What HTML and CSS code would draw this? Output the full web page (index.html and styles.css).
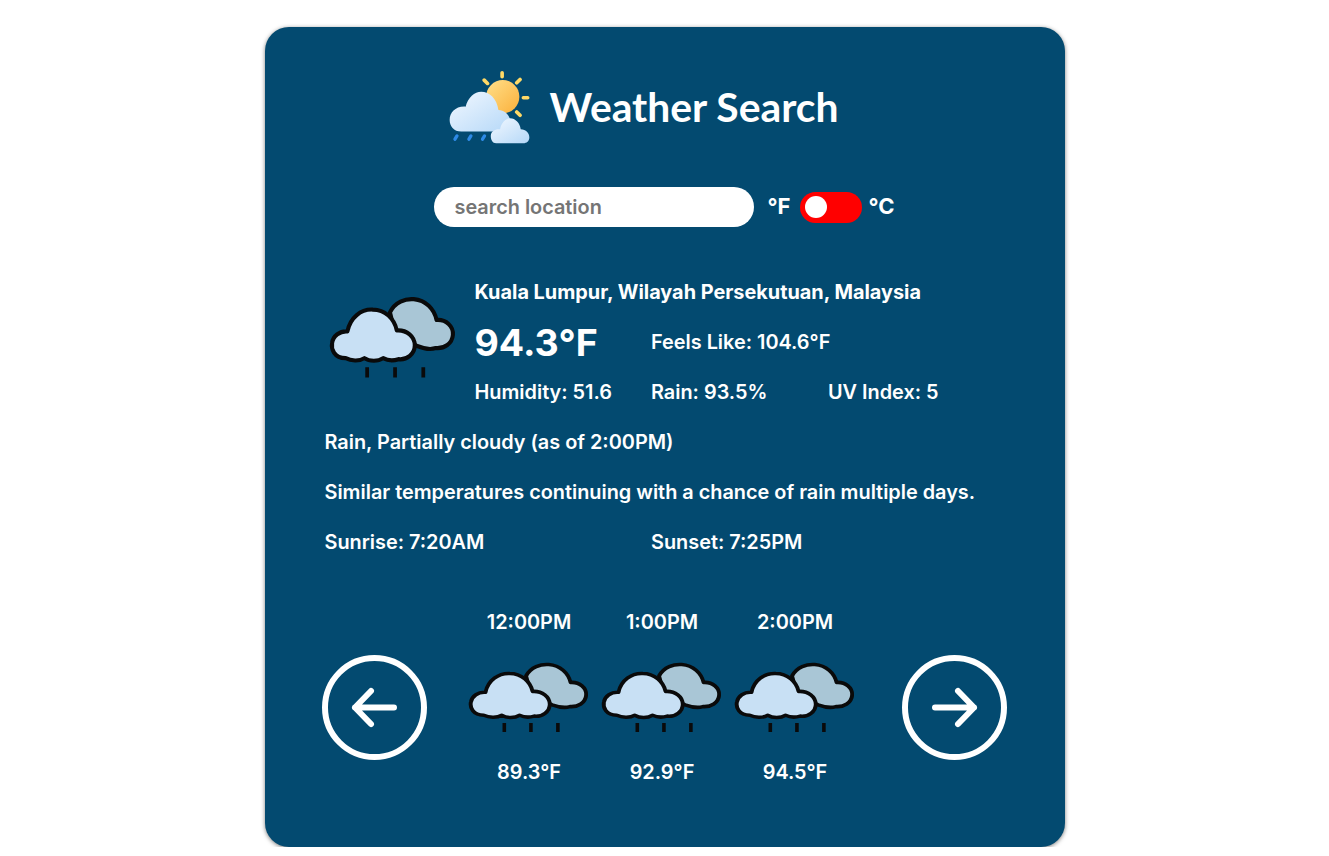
FILE: index.html
```html
<!DOCTYPE html>
<html lang="en">
<head>
    <meta charset="UTF-8">
    <meta name="viewport" content="width=device-width, initial-scale=1.0">
    <title>Weather Search</title>
    <link rel="stylesheet" href="styles.css">
</head>
<body>
    <svg class="sprites" width="0" height="0" aria-hidden="true">
        <symbol id="rainCloud" viewBox="40 50 385 245" preserveAspectRatio="none">
            <path d="M225 100 C240 70 270 60 295 62 C330 65 355 90 362 122 C390 120 412 140 410 165 C408 190 385 205 360 203 C345 208 325 205 305 197 L240 160 Z" fill="#a9c6d6" stroke="#0a0a0a" stroke-width="12" stroke-linejoin="round"/>
            <path d="M95 232 C60 232 52 205 55 188 C58 168 78 153 100 155 C108 115 140 90 175 92 C210 92 238 118 245 152 C275 150 298 170 298 195 C298 220 275 238 250 235 C235 240 220 240 205 232 C190 242 165 242 150 232 C135 242 110 240 95 232 Z" fill="#c8e0f4" stroke="#0a0a0a" stroke-width="12" stroke-linejoin="round"/>
            <path d="M158 258 V288 M240 258 V288 M323 258 V288" stroke="#0a0a0a" stroke-width="11" fill="none"/>
        </symbol>
    </svg>

    <div class="card">
        <div class="header">
            <svg class="logo" viewBox="55 60 250 225">
                <defs>
                    <linearGradient id="sunFill" x1="0" y1="0" x2="1" y2="1">
                        <stop offset="0" stop-color="#ffe08a"/>
                        <stop offset="1" stop-color="#fbb03b"/>
                    </linearGradient>
                    <linearGradient id="cloudFill" x1="0" y1="0" x2="1" y2="1">
                        <stop offset="0" stop-color="#f2f8ff"/>
                        <stop offset="1" stop-color="#b5d8f8"/>
                    </linearGradient>
                </defs>
                <path d="M218 68 V80 M164 90 L174 100 M272 88 L262 98 M282 143 H295 M262 186 L272 196" stroke="#ffd966" stroke-width="11" stroke-linecap="round"/>
                <circle cx="220" cy="140" r="50" fill="url(#sunFill)"/>
                <path d="M95 245 C72 245 60 228 60 210 C60 188 78 168 108 170 C115 142 135 125 155 125 C180 125 202 145 207 180 C232 182 248 200 245 245 Z" fill="url(#cloudFill)"/>
                <path d="M200 280 C188 280 183 268 184 256 C185 244 198 236 212 238 C215 220 228 205 242 205 C258 205 272 220 274 238 C290 238 300 250 300 262 C300 274 292 280 282 280 Z" fill="url(#cloudFill)"/>
                <path d="M82 258 L76 268 M124 258 L118 268 M165 258 L159 268" stroke="#2e8ae6" stroke-width="10" stroke-linecap="round"/>
            </svg>
            <h1>Weather Search</h1>
        </div>

        <div class="search-row">
            <input type="text" class="search-input" placeholder="search location">
            <span class="unit">°F</span>
            <div class="toggle"><span class="knob"></span></div>
            <span class="unit">°C</span>
        </div>

        <div class="details">
            <svg class="main-icon"><use href="#rainCloud"/></svg>
            <div class="location">Kuala Lumpur, Wilayah Persekutuan, Malaysia</div>
            <div class="temp">94.3°F</div>
            <div class="feels">Feels Like: 104.6°F</div>
            <div>Humidity: 51.6</div>
            <div>Rain: 93.5%</div>
            <div>UV Index: 5</div>
            <div class="full">Rain, Partially cloudy (as of 2:00PM)</div>
            <div class="full">Similar temperatures continuing with a chance of rain multiple days.</div>
            <div class="half">Sunrise: 7:20AM</div>
            <div class="half">Sunset: 7:25PM</div>
        </div>

        <div class="forecast">
            <button class="arrow">
                <svg viewBox="0 0 105 105">
                    <circle cx="52.5" cy="52.5" r="49.5"/>
                    <path d="M72 52.5 H33 M49 36 L33 52.5 L49 69"/>
                </svg>
            </button>
            <div class="hours">
                <div class="hour">
                    <div class="hour-text">12:00PM</div>
                    <div class="hour-icon"><svg><use href="#rainCloud"/></svg></div>
                    <div class="hour-text">89.3°F</div>
                </div>
                <div class="hour">
                    <div class="hour-text">1:00PM</div>
                    <div class="hour-icon"><svg><use href="#rainCloud"/></svg></div>
                    <div class="hour-text">92.9°F</div>
                </div>
                <div class="hour">
                    <div class="hour-text">2:00PM</div>
                    <div class="hour-icon"><svg><use href="#rainCloud"/></svg></div>
                    <div class="hour-text">94.5°F</div>
                </div>
            </div>
            <button class="arrow">
                <svg viewBox="0 0 105 105">
                    <circle cx="52.5" cy="52.5" r="49.5"/>
                    <path d="M33 52.5 H72 M56 36 L72 52.5 L56 69"/>
                </svg>
            </button>
        </div>
    </div>
</body>
</html>
```

FILE: styles.css
```css
body {
    margin: 0;
    background-color: #fff;
    color: #fff;
    font-family: "Inter", "Liberation Sans", sans-serif;
    font-size: 19.86px;
    font-weight: 600;
}

.sprites {
    position: absolute;
}

.card {
    width: 800px;
    height: 820px;
    margin: 27px auto 0;
    padding: 43px 60px 0;
    box-sizing: border-box;
    background-color: #034a70;
    border-radius: 24px;
    box-shadow: 0 1px 4px rgba(0,0,0,0.5);
}

.header {
    display: flex;
    justify-content: center;
    align-items: center;
    gap: 19px;
    height: 75px;
    padding-right: 43px;
}

.logo {
    width: 83px;
    height: 75px;
}

h1 {
    margin: -2px 0 0;
    font-family: "Lato", sans-serif;
    font-size: 40.8px;
    font-weight: 700;
}

.search-row {
    display: flex;
    justify-content: center;
    align-items: center;
    gap: 10px;
    height: 40px;
    margin-top: 42px;
}

.search-input {
    width: 320px;
    height: 40px;
    margin-right: 3px;
    padding: 0 20px;
    box-sizing: border-box;
    border: none;
    border-radius: 20px;
    font-family: inherit;
    font-size: 19.86px;
    font-weight: 600;
}

.search-input::placeholder {
    color: #757575;
}

.unit {
    margin-top: -2px;
    font-size: 22px;
    font-weight: 700;
}

.toggle {
    display: flex;
    align-items: center;
    width: 62px;
    height: 31px;
    margin: 0 -3px 0 -1px;
    padding-left: 5px;
    box-sizing: border-box;
    background-color: #f00;
    border-radius: 16px;
}

.knob {
    width: 22px;
    height: 22px;
    background-color: #fff;
    border-radius: 50%;
}

.details {
    display: grid;
    grid-template-columns: 150px 176.5px 177px 1fr;
    grid-auto-rows: 50px;
    align-items: center;
    margin-top: 40px;
}

.main-icon {
    grid-row: 1 / 4;
    grid-column: 1;
    width: 131px;
    height: 85px;
    margin: -10px 0 0 2px;
}

.location {
    grid-column: 2 / 5;
    font-weight: 700;
}

.temp {
    font-size: 37.5px;
    font-weight: 700;
}

.feels {
    grid-column: 3 / 5;
}

.full {
    grid-column: 1 / 5;
}

.half {
    grid-column: span 2;
}

.forecast {
    display: flex;
    justify-content: space-between;
    margin: 30px -2px 0 -3px;
}

.arrow {
    width: 105px;
    height: 105px;
    margin-top: 58px;
    padding: 0;
    background: none;
    border: none;
    cursor: pointer;
}

.arrow svg {
    display: block;
    width: 105px;
    height: 105px;
    fill: none;
    stroke: #fff;
    stroke-width: 6;
    stroke-linecap: round;
    stroke-linejoin: round;
}

.hours {
    display: flex;
    margin-right: 4px;
}

.hour {
    width: 133px;
    text-align: center;
}

.hour-text {
    height: 50px;
    line-height: 50px;
}

.hour-icon {
    display: flex;
    justify-content: center;
    align-items: center;
    height: 100px;
    padding-right: 2px;
}

.hour-icon svg {
    width: 125px;
    height: 73px;
}
```
